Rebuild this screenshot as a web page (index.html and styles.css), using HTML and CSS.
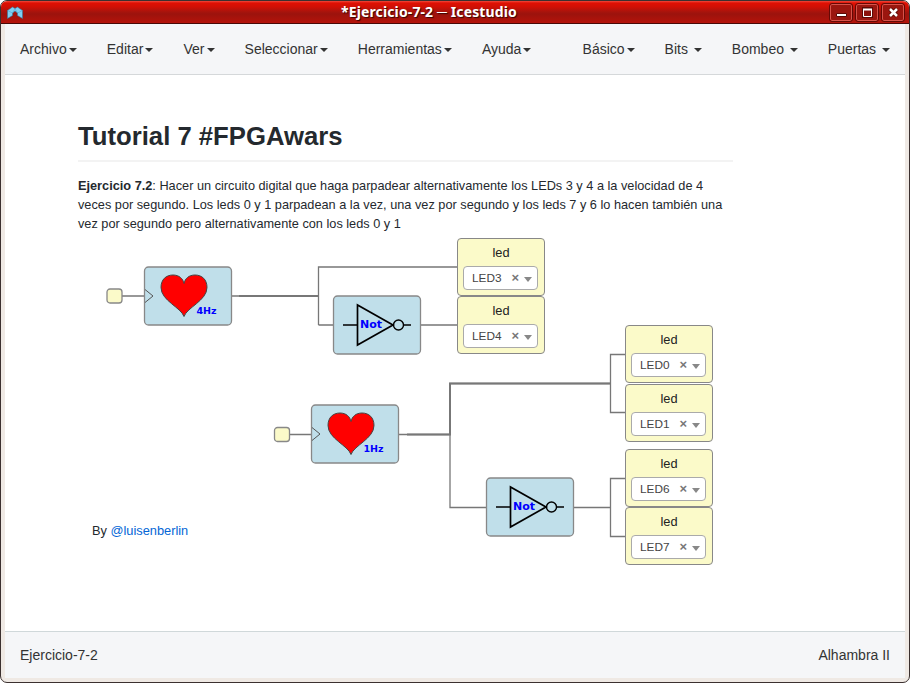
FILE: index.html
```html
<!DOCTYPE html>
<html lang="es">
<head>
<meta charset="utf-8">
<title>*Ejercicio-7-2 ─ Icestudio</title>
<link rel="stylesheet" href="styles.css">
</head>
<body>
<div class="window">
  <header class="titlebar">
    <svg class="logo" width="16" height="14" viewBox="0 0 16 14"><path d="M.5 4.500 5.500 1 8 2.500 10.500 1 15.500 4.500V12.500L10.500 9.500V7L8 5 5.500 7V9.500L.5 12.500Z" fill="#7fd0f2" stroke="#35799c" stroke-width=".6"/><path d="M.5 4.500 5.500 7 8 2.500 10.500 7 15.500 4.500" fill="none" stroke="#4a9fc8" stroke-width=".5"/></svg>
    <div class="caption">*Ejercicio-7-2 ─ Icestudio</div>
    <div class="controls">
      <button class="control" aria-label="Minimizar"><svg width="20" height="15"><path d="M5.500 8.500h10v3h-10z" fill="#fff" stroke="#5c0a06"/></svg></button>
      <button class="control" aria-label="Maximizar"><svg width="20" height="15"><path d="M5 2h11v11H5z" fill="#5c0a06"/><path d="M6.500 4.500h8v7h-8z" fill="#8c120c" stroke="#fff"/><path d="M6 4.500h9" stroke="#fff" stroke-width="2"/></svg></button>
      <button class="control" aria-label="Cerrar"><svg width="20" height="15"><path d="m7 4 7 7m0-7-7 7" stroke="#5c0a06" stroke-width="4.500"/><path d="m7 4 7 7m0-7-7 7" stroke="#fff" stroke-width="2.500"/></svg></button>
    </div>
  </header>
  <div class="app">
    <nav class="menubar">
      <div class="menus">
        <a class="menu">Archivo<i class="caret"></i></a><a class="menu">Editar<i class="caret"></i></a><a class="menu">Ver<i class="caret"></i></a><a class="menu">Seleccionar<i class="caret"></i></a><a class="menu">Herramientas<i class="caret"></i></a><a class="menu">Ayuda<i class="caret"></i></a>
      </div>
      <div class="menus right">
        <a class="menu">Básico<i class="caret"></i></a><a class="menu">Bits <i class="caret"></i></a><a class="menu">Bombeo <i class="caret"></i></a><a class="menu">Puertas <i class="caret"></i></a>
      </div>
    </nav>
    <main class="canvas">
      <article class="note">
        <h1>Tutorial 7 #FPGAwars</h1>
        <p><b>Ejercicio 7.2</b>: Hacer un circuito digital que haga parpadear alternativamente los LEDs 3 y 4 a la velocidad de 4<br>veces por segundo. Los leds 0 y 1 parpadean a la vez, una vez por segundo y los leds 7 y 6 lo hacen también una<br>vez por segundo pero alternativamente con los leds 0 y 1</p>
      </article>
      <svg class="wires" width="900" height="556" viewBox="5 75 900 556">
        <defs>
          <path id="heart" d="M23 42C20 33 0 26 0 13C0 5 5 .5 12 .5C18 .5 22 4 23 9C24 4 28 .5 34 .5C41 .5 46 5 46 13C46 26 26 33 23 42Z" fill="red" stroke="#444"/>
          <g id="clock"><rect x=".5" y=".5" width="87" height="58" rx="4" fill="#c0dfea" stroke="#888" stroke-width="1.300"/><path d="m1 23 8 6.500-8 6.500" fill="none" stroke="#555"/><use href="#heart" x="17" y="8"/></g>
          <g id="inverter"><rect x=".5" y=".5" width="87" height="58" rx="4" fill="#c0dfea" stroke="#888" stroke-width="1.300"/><path d="M10 29.500h14.500M70.500 29.500H78" stroke="#000" stroke-width="1.400"/><path d="M24.500 9.500v40L60 29.500Z" fill="none" stroke="#000" stroke-width="1.700"/><circle cx="65.500" cy="29.500" r="5" fill="none" stroke="#000" stroke-width="1.400"/><text x="27" y="32.500" class="tag">Not</text></g>
          <rect id="pin" width="15" height="14" rx="3" fill="#fbfac9" stroke="#888" stroke-width="1.300"/>
        </defs>
        <g class="wire">
          <path d="M122 296H144M232 296H318.500M318.500 325V267H458M318.500 325H333M420 325H458"/>
          <path d="M290 434.500H311M399 434.500H450M610.500 383.500H450V507.500H487M625 354.500H610.500V412.500H625M574 507.500H610.500M625 478.500H610.500V536.500H625"/>
          <path class="bus" d="M239 296H318M407 434.500H450V383.500H610.500"/>
        </g>
        <use href="#pin" x="107" y="289"/><use href="#pin" x="274.500" y="427.500"/>
        <use href="#clock" x="144" y="266.500"/><text x="196.500" y="314" class="tag small">4Hz</text>
        <use href="#clock" x="311" y="404.500"/><text x="363.500" y="452" class="tag small">1Hz</text>
        <use href="#inverter" x="333" y="295.500"/><use href="#inverter" x="486" y="477.500"/>
      </svg>
      <div class="led led3">led<div class="select"><span>LED3</span><b>×</b><i></i></div></div>
      <div class="led led4">led<div class="select"><span>LED4</span><b>×</b><i></i></div></div>
      <div class="led led0">led<div class="select"><span>LED0</span><b>×</b><i></i></div></div>
      <div class="led led1">led<div class="select"><span>LED1</span><b>×</b><i></i></div></div>
      <div class="led led6">led<div class="select"><span>LED6</span><b>×</b><i></i></div></div>
      <div class="led led7">led<div class="select"><span>LED7</span><b>×</b><i></i></div></div>
      <div class="author">By <a>@luisenberlin</a></div>
    </main>
    <footer class="status"><span>Ejercicio-7-2</span><span>Alhambra II</span></footer>
  </div>
</div>
</body>
</html>
```
FILE: styles.css
```css
* { box-sizing: border-box; }
body { margin: 0; background: #fff; font: 14px/20px "Liberation Sans", Arial, sans-serif; color: #333; }
.window { height: 683px; overflow: hidden; display: flex; flex-direction: column; border: 1px solid #3b302f; border-radius: 7px; background: #efe9e4; }
.titlebar { height: 23px; flex: none; display: grid; grid-template-columns: 80px 1fr 80px; align-items: center; background: linear-gradient(#f04a3c 0, #df1003 2px, #cf1005 6px, #a6140d 11px, #9c130d 13px, #b5130a 22px, #480907 22px); }
.logo { margin-left: 6px; margin-top: 1px; }
.caption { text-align: center; color: #fff; font: bold 14px/20px "Noto Sans", "Open Sans", sans-serif; letter-spacing: .12px; text-shadow: 1px 1px 1px #390300; white-space: nowrap; position: relative; left: -26px; top: -1px; }
.controls { display: flex; justify-content: flex-end; gap: 4px; padding-right: 5px; }
.control { width: 22px; height: 17px; flex: none; padding: 0; border: 1px solid #d7534a; border-radius: 2px; background: #9b160f; outline: 1px solid #650905; outline-offset: 0; }
.control svg { display: block; }
.app { flex: 1; min-height: 0; margin: 0 4px 4px; display: flex; flex-direction: column; background: #fff; }
.menubar { height: 51px; flex: none; display: flex; justify-content: space-between; align-items: center; padding: 0 15px; background: #f5f6f8; border-bottom: 1px solid #d5d8da; }
.menus { display: flex; gap: 30px; }
.menu { white-space: pre; display: flex; align-items: center; }
.caret { margin-left: 2.1px; border: 4px solid transparent; border-top-color: #333; border-bottom: 0; margin-top: 2px; }
.right .caret { margin-left: 2px; }
.canvas { flex: 1; position: relative; }
.note { width: 655px; margin-left: 73px; padding-top: 43px; color: #24292e; font-size: 12.74px; line-height: 19px; }
.note h1 { margin: 0 0 14px; height: 44px; border-bottom: 2px solid #f3f3f3; font-size: 25.7px; line-height: 36px; }
.note p { margin: 0; white-space: nowrap; }
.wires { position: absolute; inset: 0; }
.wire { fill: none; stroke: #777; stroke-width: 1.3; }
.bus { stroke-width: 2; }
.tag { font: bold 11px "DejaVu Sans", sans-serif; fill: #00f; }
.small { font-size: 9.5px; }
.led { position: absolute; width: 88px; height: 58px; padding: 4px 6px; border: 1px solid #888; border-radius: 4px; background: #fbfac9; color: #222; text-align: center; font-size: 12.8px; }
.led3 { left: 452px; top: 163px; }
.led4 { left: 452px; top: 221px; }
.led0 { left: 620px; top: 250px; }
.led1 { left: 620px; top: 309px; }
.led6 { left: 620px; top: 374px; }
.led7 { left: 620px; top: 432px; }
.select { height: 24px; width: 75px; margin-top: 3px; border: 1px solid #aaa; border-radius: 4px; background: #fff; display: flex; align-items: center; padding: 0 5px 0 8px; margin-left: -1px; color: #444; font-size: 11.8px; }
.select b { margin-left: auto; color: #777; font-size: 13px; }
.select i { margin-left: 5px; border: 4px solid transparent; border-top: 5px solid #888; border-bottom: 0; margin-top: 2px; }
.author { position: absolute; left: 87px; top: 446px; color: #24292e; font-size: 12.8px; }
.author a { color: #0366d6; }
.status { height: 47px; flex: none; display: flex; justify-content: space-between; align-items: center; padding: 0 15px; background: #f5f6f8; border-top: 1px solid #d0d8da; }
```
